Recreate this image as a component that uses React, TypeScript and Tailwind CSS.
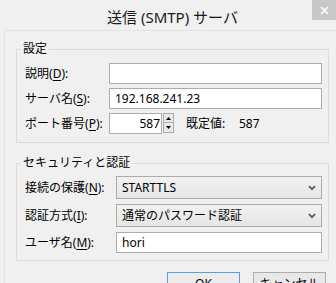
import React from 'react'

const font = { fontFamily: '"Noto Sans", "Noto Sans CJK JP", sans-serif' }

const Label = ({ text, k, w }: { text: string; k: string; w: string }) => (
  <span className={`${w} shrink-0 text-[12px] leading-[16px] text-black`}>
    {text}(<span className="underline underline-offset-2">{k}</span>):
  </span>
)

const Chevron = () => (
  <svg width="8" height="6" viewBox="0 0 8 6" className="shrink-0">
    <path d="M1 1.2 L4 4.2 L7 1.2" fill="none" stroke="#5a5a5a" strokeWidth="1.8" />
  </svg>
)

const Select = ({ value }: { value: string }) => (
  <div className="flex h-[23px] w-[206px] items-center justify-between border border-[#acacac] bg-gradient-to-b from-[#f2f2f2] to-[#e5e5e5] pl-[5px] pr-[5px]">
    <span className="text-[12px] leading-[16px] text-black">{value}</span>
    <Chevron />
  </div>
)

const App = () => {
  return (
    <div className="h-[283px] w-[336px] overflow-hidden bg-[#f0f0f0]" style={font}>
      {/* Title bar */}
      <div className="relative h-[30px]">
        <div className="pl-[107px] pt-[7px] text-[15px] leading-[20px] text-[#1a1a1a]">
          送信 (SMTP) サーバ
        </div>
        <div className="absolute right-0 top-0 flex h-[20px] w-[24px] items-center justify-center bg-[#c8c8c8]">
          <svg width="9" height="9" viewBox="0 0 9 9">
            <path d="M1 1 L8 8 M8 1 L1 8" stroke="#fff" strokeWidth="1.6" />
          </svg>
        </div>
      </div>

      {/* Panel */}
      <div className="ml-[4px] w-[340px] border-l border-t border-[#e2e2e2] pl-[11px] pt-[10px]">
        <fieldset className="w-[313px] border border-[#dcdcdc] pb-[8px] pl-[8px] pr-[6px] pt-[6px]">
          <legend className="-ml-[4px] px-[2px] text-[12px] leading-[16px] text-black">設定</legend>
          <div className="flex flex-col gap-[4px]">
            <div className="flex h-[21px] items-center">
              <Label text="説明" k="D" w="w-[84px]" />
              <div className="h-[21px] flex-1 border border-[#adadad] bg-white" />
            </div>
            <div className="flex h-[21px] items-center">
              <Label text="サーバ名" k="S" w="w-[84px]" />
              <div className="flex h-[21px] flex-1 items-center border border-[#adadad] bg-white pl-[5px] text-[12px] leading-[16px] text-black">
                192.168.241.23
              </div>
            </div>
            <div className="flex h-[21px] items-center">
              <Label text="ポート番号" k="P" w="w-[84px]" />
              <div className="flex h-[21px] w-[53px] items-center justify-end border border-[#adadad] bg-white pr-[1px] text-[12px] leading-[16px] text-black">
                587
              </div>
              <div className="ml-[1px] flex h-[21px] w-[11px] flex-col">
                <div className="flex h-[10px] items-center justify-center border border-[#acacac] bg-[#e8e8e8]">
                  <svg width="5" height="3" viewBox="0 0 5 3">
                    <path d="M0 3 L2.5 0 L5 3 Z" fill="#000" />
                  </svg>
                </div>
                <div className="-mt-px flex h-[11px] items-center justify-center border border-[#acacac] bg-[#e8e8e8]">
                  <svg width="5" height="3" viewBox="0 0 5 3">
                    <path d="M0 0 L2.5 3 L5 0 Z" fill="#000" />
                  </svg>
                </div>
              </div>
              <span className="ml-[12px] w-[53px] text-[12px] leading-[16px] text-black">既定値:</span>
              <span className="text-[12px] leading-[16px] text-black">587</span>
            </div>
          </div>
        </fieldset>

        <fieldset className="mt-[12px] w-[313px] border border-[#dcdcdc] pb-[7px] pl-[8px] pr-[6px] pt-[5px]">
          <legend className="-ml-[4px] px-[2px] text-[12px] leading-[16px] text-black">セキュリティと認証</legend>
          <div className="flex flex-col gap-[5px]">
            <div className="flex items-center">
              <Label text="接続の保護" k="N" w="w-[91px]" />
              <Select value="STARTTLS" />
            </div>
            <div className="flex items-center">
              <Label text="認証方式" k="I" w="w-[91px]" />
              <Select value="通常のパスワード認証" />
            </div>
            <div className="flex items-center">
              <Label text="ユーザ名" k="M" w="w-[91px]" />
              <div className="flex h-[21px] w-[206px] items-center border border-[#adadad] bg-white pl-[5px] text-[12px] leading-[16px] text-black">
                hori
              </div>
            </div>
          </div>
        </fieldset>

        {/* Buttons */}
        <div className="mt-[11px] flex w-[313px] justify-end gap-[13px] pr-[3px]">
          <button className="h-[23px] w-[73px] border border-[#5a9ee0] bg-[#ececec] text-[12px] leading-[16px] text-black">
            OK
          </button>
          <button className="h-[23px] w-[73px] border border-[#acacac] bg-[#e8e8e8] text-[12px] leading-[16px] text-black">
            キャンセル
          </button>
        </div>
      </div>
    </div>
  )
}

export default App
